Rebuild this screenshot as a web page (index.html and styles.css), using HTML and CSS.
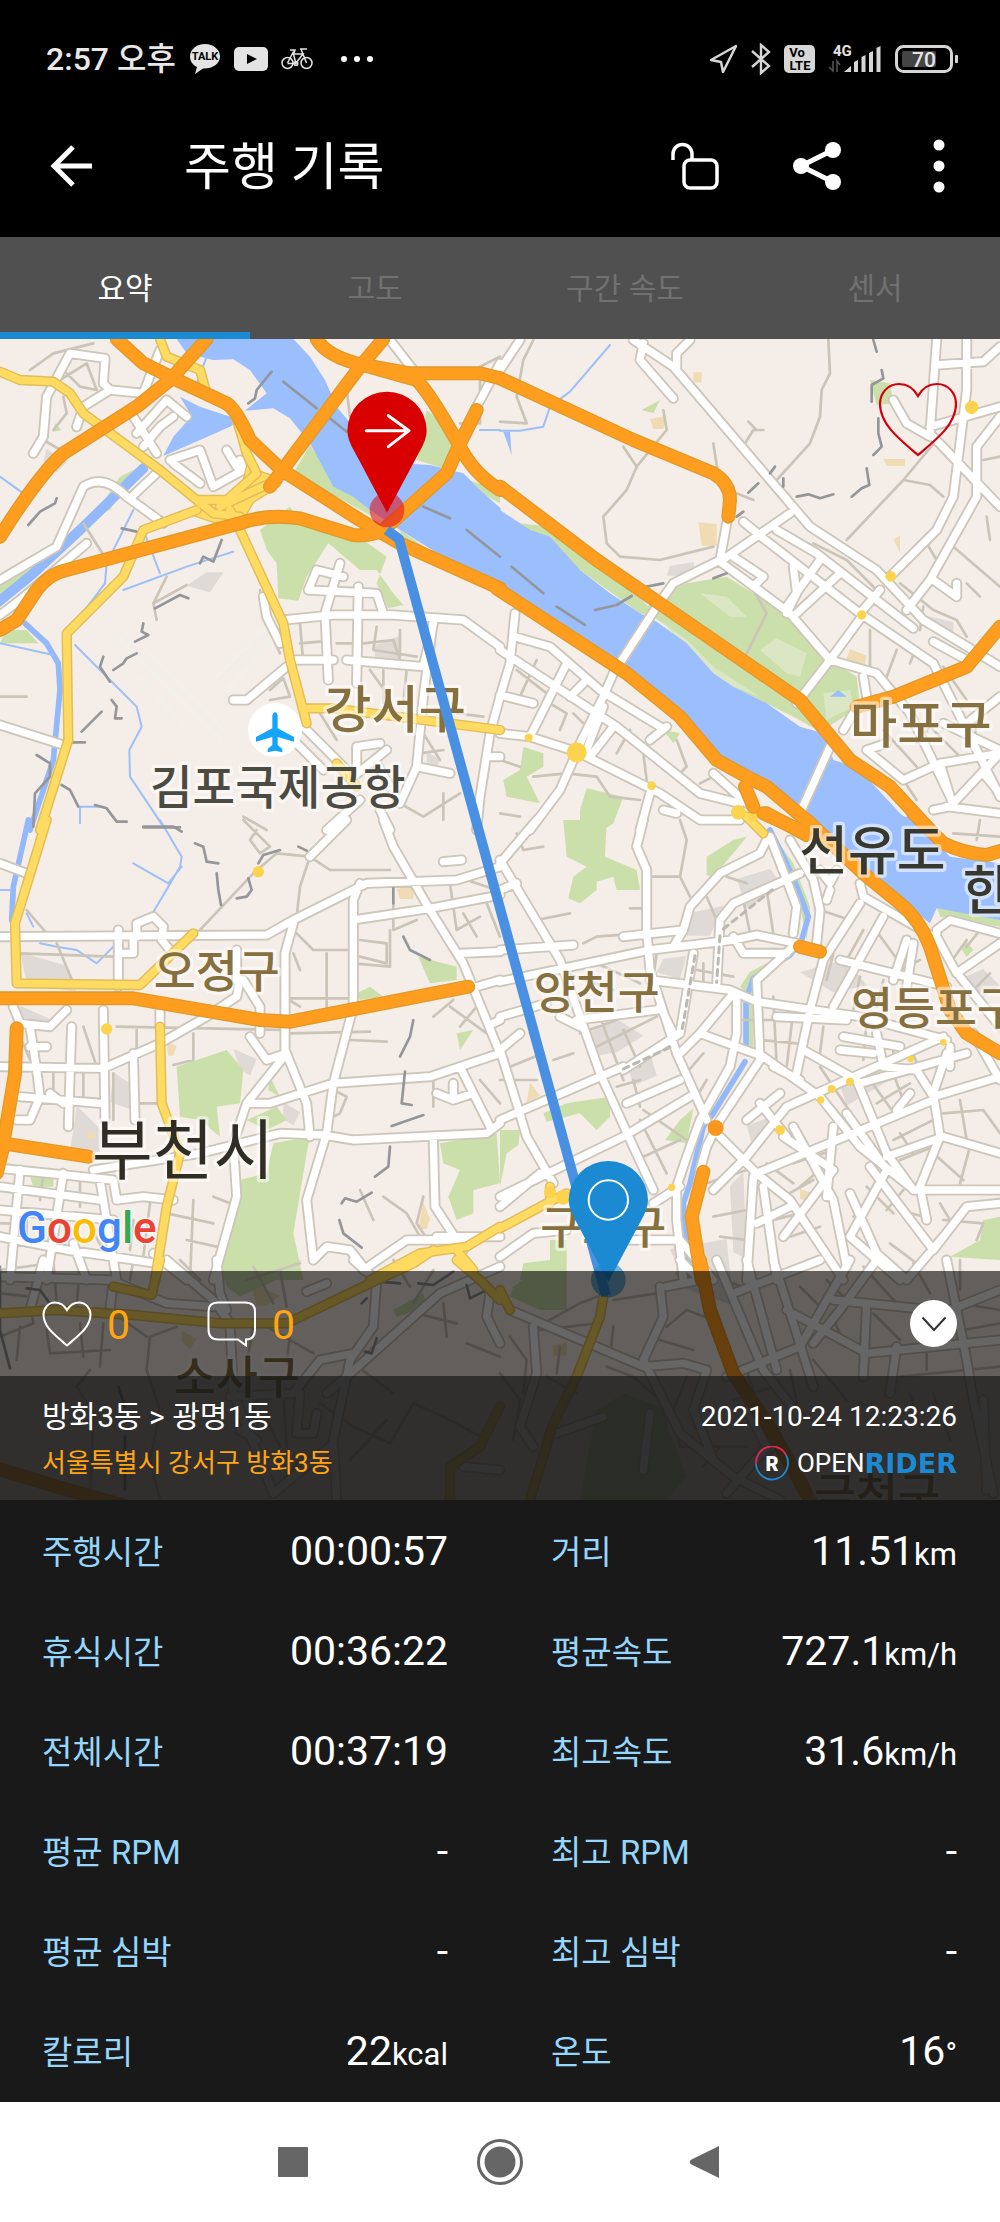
FILE: index.html
```html
<!DOCTYPE html>
<html lang="ko">
<head>
<meta charset="utf-8">
<meta name="viewport" content="width=device-width, initial-scale=1">
<title>주행 기록</title>
<link rel="stylesheet" href="styles.css">
</head>
<body>
<div class="status">
  <div class="status-left">
    <span class="clock">2:57 오후</span>
    <svg class="ic" width="32" height="32" viewBox="0 0 32 32"><path d="M16 1C7.500 1 1 6.500 1 13.500c0 5 3 8.500 7 10.500l-2 7 8-5.500c9 .5 17-4.500 17-12C31 6.500 24.500 1 16 1z" fill="#e4e4e4"/><text x="16" y="17" class="talk">TALK</text></svg>
    <svg class="ic" width="34" height="26" viewBox="0 0 34 26"><rect y="1" width="34" height="24" rx="5" fill="#e4e4e4"/><path d="M13 8l10 5-10 5z" fill="#000"/></svg>
    <svg class="ic" width="32" height="24" viewBox="0 0 32 24" fill="none" stroke="#e4e4e4" stroke-width="1.500"><circle cx="6.500" cy="16" r="5.500"/><circle cx="25.500" cy="16" r="5.500"/><circle cx="15" cy="16.500" r="1.800"/><path d="M6.500 16L12 5.500 15 16.500H6.500M12 7h10l-7 9M20 2l5.500 14M19 2h7M9 3h5l-1 3"/></svg>
    <svg class="ic more" width="34" height="8" viewBox="0 0 34 8" fill="#fff"><circle cx="4" cy="4" r="3"/><circle cx="17" cy="4" r="3"/><circle cx="30" cy="4" r="3"/></svg>
  </div>
  <div class="status-right">
    <svg class="ic" width="29" height="30" viewBox="0 0 29 30"><path d="M27 2L2 16l10 2 2 10z" fill="none" stroke="#d6d6d6" stroke-width="2.500" stroke-linejoin="round"/></svg>
    <svg class="ic" width="20" height="32" viewBox="0 0 20 32"><path d="M1 8l17 15-8 7V2l8 7L1 24" fill="none" stroke="#d6d6d6" stroke-width="2.400"/></svg>
    <svg class="ic" width="31" height="28" viewBox="0 0 31 28"><rect width="31" height="28" rx="5" fill="#d6d6d6"/><text x="13" y="12" class="lte">Vo</text><text x="16" y="25" class="lte">LTE</text></svg>
    <svg class="ic" width="54" height="30" viewBox="0 0 54 30"><text x="5" y="12" class="net">4G</text><path d="M5 17v10l-4-4M9 28V17l3 4" fill="none" stroke="#555" stroke-width="1.500"/><path d="M16 28l7-6v6zM26 28V18l4-2v12zM33.500 28V13l4-2v17zM41 28V9l4-2v21zM48.500 28V4l4-2v26z" fill="#d6d6d6"/></svg>
    <svg class="ic" width="64" height="28" viewBox="0 0 64 28"><rect x="1.500" y="1.500" width="55" height="25" rx="7" fill="none" stroke="#d6d6d6" stroke-width="3"/><rect x="7" y="6" width="34" height="16" rx="2" fill="#444"/><rect x="60" y="10" width="3" height="8" rx="1" fill="#d6d6d6"/><text x="29" y="22" class="batt">70</text></svg>
  </div>
</div>

<header class="appbar">
  <button class="icon-btn" aria-label="뒤로"><svg width="48" height="48" viewBox="0 0 48 48" fill="none" stroke="#fff" stroke-width="5"><path d="M44 24H7M25 5L6 24l19 19"/></svg></button>
  <h1>주행 기록</h1>
  <div class="actions">
    <button class="icon-btn" aria-label="잠금 해제"><svg width="48" height="48" viewBox="0 0 48 48" fill="none" stroke="#fff" stroke-width="3.500"><rect x="13" y="18" width="33" height="28" rx="6"/><path d="M2 18v-6a9.500 9.500 0 0 1 19 0v6"/></svg></button>
    <button class="icon-btn" aria-label="공유"><svg width="48" height="48" viewBox="0 0 48 48"><path d="M40 8L8 24l32 16" fill="none" stroke="#fff" stroke-width="5"/><g fill="#fff"><circle cx="40" cy="8" r="8"/><circle cx="8" cy="24" r="8"/><circle cx="40" cy="40" r="8"/></g></svg></button>
    <button class="icon-btn" aria-label="더 보기"><svg width="48" height="54" viewBox="0 0 48 54" fill="#fff"><circle cx="24" cy="6" r="5.500"/><circle cx="24" cy="27" r="5.500"/><circle cx="24" cy="48" r="5.500"/></svg></button>
  </div>
</header>

<nav class="tabs">
  <button class="tab active">요약</button>
  <button class="tab">고도</button>
  <button class="tab">구간 속도</button>
  <button class="tab">센서</button>
</nav>

<section class="map">
<svg class="map-art" viewBox="0 0 3000 3483">
<defs>
<g id="lanes">
  <g transform="translate(0 -27)"><path d="M90 120L160 70L280 40M180 150L260 100L290 180L240 170L200 130M130 330L200 370L250 330M160 300L200 250L190 200M500 740L460 820L470 870M460 820L560 765M250 580L320 690M780 780L790 860L840 970M900 880L910 1000M900 940L960 935M1010 940H1060M1090 940L1180 930L1200 990M1200 900V980M1130 890L1120 960L1250 980M810 1080L850 1045L870 1100L810 1110M960 1150L1010 1230M1110 1020L1160 1090M1150 1020V1120M1220 1020L1210 1120M1270 1210L1320 1290M1260 1270L1330 1260M1370 1150L1450 1160M1200 1420L1270 1460L1380 1390M1330 1390V1470M730 1460L800 1500M0 1100H80M1380 280H1440L1440 110L1500 80M1040 180L1050 260"/></g>
  <g transform="translate(1500 -27)"><path d="M100 30L70 90L50 200L80 280L0 275M985 30L990 130L965 180L960 260L930 340L830 450M735 340L760 300L790 300M745 275L770 300M640 340L660 470L760 510M370 350L410 410L500 300L490 240M410 410L380 480L310 560L320 640L360 680L480 690L640 650M1310 330L1210 450L1040 630M1210 450L1290 465L1330 500M1500 380L1450 390M1460 560L1470 630M1280 640L1310 690M1360 650L1500 770M1200 760L1300 840L1370 870L1400 920M1270 830L1260 900M1400 760L1440 800M1110 900V1030M1190 960L1160 1040M1250 950L1230 1000M1330 1010L1400 1110M760 780L800 850L740 970M940 640L1040 690L1130 780M50 1020L140 1090M110 990L60 1100M150 1120L200 1150L180 1200M220 1150L250 1180M350 1110L420 1150M390 1200L350 1270M0 1290L60 1310M100 1340L200 1330L290 1340L330 1400L420 1410M430 1270L440 1350M530 1230L560 1310L530 1340M640 1340L600 1360M0 1450L60 1460M1150 1200L1250 1310M1250 1240L1290 1190L1400 1300M1210 1350L1250 1410M1430 1170L1420 1260"/></g>
  <g transform="translate(0 1443)"><path d="M600 330L760 160L830 100L930 110L900 200L890 290M730 0L810 80L780 100L750 60L770 30M930 110L990 150L1170 150M890 340L940 390L1060 390M980 400V560M900 560L860 535H1050M880 400L900 450M1080 360L1160 370V430L1080 410M1060 430L1170 440V330M870 640L1110 635M1050 660L1160 665M1180 250V330L1250 300M1350 190L1370 330L1440 290M1390 280L1430 350M1460 250L1500 350M1400 180L1490 210M80 270L140 340M60 400L340 410M170 370L220 490M250 620L290 740M350 620L860 630M60 650L100 740M410 630V700M580 640V720L520 735M160 750V850M250 750V850M340 760V900M420 850H480M450 1150L430 1310M500 1180L640 1210M580 1140L570 1380M640 1130L690 1150M560 1260L650 1280M130 1060L120 1140M240 1060V1160M80 1200V1280M150 1180L170 1290M0 1210H60M260 1200L310 1290M0 1350L150 1330M400 1200L390 1290M1080 1110L1120 1200M1150 1130L1220 1180L1260 1250M1270 1130L1250 1210L1290 1270M1350 560L1460 640M1380 620L1430 560M1300 590L1360 540M1000 810L1040 830L1020 880L980 900M1300 770V860M1440 780L1500 850"/></g>
  <g transform="translate(1500 1443)"><path d="M50 40L70 90L130 80M140 370L110 300L210 280M390 265H430M440 170L540 170L560 60M540 0L560 60M540 170L570 230M620 230L650 300M730 240L750 340M800 210L820 340L780 350M680 170L740 190M250 370L290 350L420 340M470 400L460 470M290 430L420 490M200 460L340 510M240 640L350 600M270 690L470 590M300 590L370 780M370 630L420 740M90 640L130 700L30 740M160 720L220 700M0 780L110 780M350 800L420 780M400 780L420 860M430 870L560 960M430 1010L540 960M420 900L500 1060M590 450L700 470M610 430V500M610 700L550 770M620 780L590 830M730 600H840M820 530L830 740M880 570L860 740M780 660L890 670M970 620L960 700M1000 400L980 480M1050 300L960 270M1090 330L1040 420M1080 470L1060 570M1150 480L1130 560M1120 320L1200 430M1260 420L1200 450M1100 600L1090 720M1180 690V740M1230 680L1260 750M960 740L1020 830L1060 890M1110 780L1190 890M1180 760L1220 870M1130 850L1230 790M1000 990L880 1030M1050 950L930 1000M1200 940L1240 1000M1180 960L1320 890M1380 840L1400 960M1330 880L1450 870L1500 940M1200 1020L1300 980M1300 1000L1390 1080M1410 980L1380 1090M900 1100L970 1040M850 1130L940 1080M800 1030L880 1090M820 1200L900 1180M870 1250L960 1220M1100 1100L1180 1180M1060 1190L1120 1130M1160 1170L1210 1110M1200 1170L1270 1190M1170 1270L1250 1330M1330 1200L1450 1210L1430 1260M1320 1150L1350 1200M430 1100L390 1160M640 1190L740 1170M660 1250L740 1260M620 1090L740 1050M1400 360L1350 430M1440 330L1400 380M1470 460L1430 500M1360 40L1500 50M1440 0L1430 60"/></g>
  <g transform="translate(0 2763)"><path d="M0 100L90 110L100 190L0 230M160 0L170 130M240 0L230 140M60 200L50 300M140 210L150 280L330 270M240 190L250 290M310 190L300 320M370 180L440 230M530 200L450 230L440 330L480 450L450 600L480 720M270 330L230 380L280 460L270 720M400 0L390 60M540 0L600 60M760 20L820 130M740 60L900 10M840 30L860 140M760 200L740 310M800 200L940 280M870 220L860 310M770 410L750 520L800 600M850 410L860 560M960 430L1060 500L1170 550L1240 430L1330 470L1460 540M1160 480L1050 600M1130 180L1120 100M1180 0L1230 80M1300 30L1240 130M1330 130L1340 230M1250 160L1370 190M1060 310L1180 400M1400 250L1500 290M700 490L800 480L840 560M900 600L830 680"/></g>
  <g transform="translate(1500 2763)"><path d="M120 210L290 190M130 190L240 130L290 110M340 120L470 100M340 200L330 290M320 320L400 350L480 420L500 500M480 240L580 270M500 200L560 150L640 180M530 40L640 100M560 350L520 450L540 560L700 560M700 420L820 380M740 330L790 500M870 330L900 470L1000 500M940 300L1040 420M1000 180L1040 260M1120 160L1200 240M1280 150V330M1200 350L1500 320M1230 400L1260 500M1300 400L1350 540M1380 130L1500 150M1390 210L1500 190M1090 20L1190 130M1240 10L1290 100M1380 0V90M900 80L970 150M980 60L1040 120M700 70L770 100M30 230L80 300L70 400M0 340L60 420L40 540M140 350L230 400M180 260L170 340M610 620L660 560L740 560M760 620L840 560M1080 430L1190 470"/></g>
</g>
<g id="streets">
  <g transform="translate(0 -27)"><path d="M100 370L130 320L140 200L210 70L315 85L310 160L330 180L250 230L230 290M330 180L430 190L480 60M410 310L500 210L560 260M400 260L470 370M430 350L480 290L520 260M510 390L600 360L640 470L730 420L720 390M520 400L600 460M680 360L710 410M0 750L170 650L250 470Q310 430 380 500L490 580M390 505L480 420M0 855L60 810L260 640M850 870L1000 855L1180 855L1390 870L1500 950M985 1050L975 850L1020 700M1030 740L950 720L925 780L1130 790L1150 850M1075 770L1070 1060M880 990H1000M1040 990L1270 1010L1300 880M1300 870L1270 1100L1250 1310L1200 1420L1130 1300M790 800L800 860L840 940M700 1110H740L860 1010M910 1190L1050 1330M880 1230L970 1320M1070 1330V1250L1140 1240M1060 1340L1160 1260M1250 1310L1350 1330M1500 1100L1470 1210L1440 1400L1430 1500M1460 1280H1500M980 1500L1080 1410M1140 1440L1170 1500M0 1185L190 1245M1170 30L1240 120M1430 230L1500 100"/></g>
  <g transform="translate(1500 -27)"><path d="M400 30L520 110L930 590L1130 720L1270 870L1500 1010M60 30L0 120M430 40L420 90L520 205M530 110L530 70L570 30M680 580L660 690L520 760L470 830L340 1030L310 1100L230 1260M870 550L660 695L870 850L990 990L1130 1030L1230 1150L1360 1420M730 575L790 625L1080 850L1300 1000L1500 1400M830 600L950 670L1240 895M700 680L790 740L760 770M880 710L890 790L860 850M990 990L890 1120M1085 860L990 990M960 690L860 830M1020 730L890 850M1140 780L1080 850M1310 30L1290 310L1500 530M1400 30V180L1390 260L1360 500L1310 600L1170 740M1310 105L1450 95L1500 50M1290 290L1500 230M1500 260L1430 350V500L1290 750L1220 840M1180 210L1220 280L1290 320M1300 750L1370 800V760M1300 935L1400 990M0 960L350 1190L600 1390L720 1420M45 850L30 1000L0 1100M45 920L150 950L300 1080L480 1190M200 1000L90 1220M250 1060L210 1100M310 1130L260 1260M500 1190L450 1230M0 1095L100 1120M340 1190L270 1280M0 1210L90 1220L230 1265L480 1390L600 1470H720M220 1290L180 1380L90 1500M450 1390L420 1500M490 1440L530 1450M640 1330L740 1420M990 1250L900 1450M1100 1100L1090 1040M1030 1200L1060 1150M1100 1260L1210 1350L1320 1300L1500 1270M1160 1240L1100 1260M1300 1440L1350 1430L1500 1270M1340 1430L1500 1450M1450 1330L1500 1390M1330 1180L1500 1260M1320 1300L1360 1430M1400 1180L1500 1100"/></g>
  <g transform="translate(0 1443)"><path d="M0 130L80 160M0 350L800 345L880 300L1100 190L1370 180L1500 140M355 330V500M410 350V310L460 290L490 320L485 360L510 390M370 400H400V350M1150 0L1180 80L1290 270L1390 430L1500 700M930 110L1040 0M1080 190L1060 240V560L1000 790L980 940L920 1140L940 1320L980 1280L1050 1290L1090 1340M1060 300L1290 265L1500 225M1330 125L1385 120M1380 400L1500 395M1430 500L1500 480M1480 610L1500 600M880 310L855 400V690L920 850L930 950M40 560L60 610L150 620L200 570M90 620L110 750L120 830L90 900H50M0 740L310 745L480 670L620 590L710 530L720 480M710 390V480L730 480L780 560V640M310 570L315 900M215 620L205 920M60 830L300 850M90 680H140M150 820L190 850M400 700L405 900M480 570V620M750 650L800 720L860 700L740 850L700 970L710 1130L640 1380M750 850H810L1000 790L1290 770L1500 700M1380 740L1470 920M1310 820L1360 840L1420 820M1360 790V840M280 1050L600 1000L840 940L970 945L1060 960L1460 940L1500 910M1300 960L1305 1160L1390 1290M1310 1250H1500M1090 1350L1220 1260L1400 1260M0 1045L340 1080L350 1140M0 1100L300 1140M60 1050L30 1380M190 1060L140 1380M0 1170L340 1200M300 1080L350 1380M0 1250L200 1290L470 1330M220 1270L260 1380M460 1300L560 1380M350 1140L430 1130L520 1140"/></g>
  <g transform="translate(1500 1443)"><path d="M0 120L180 420L300 760L400 980L460 1110M0 130L110 0M430 0L410 80L440 150V330L450 450L530 700L620 900M0 210L50 190M0 485L450 390L700 360L770 345L890 370M0 390L220 375M370 350L550 330L570 260L660 160L780 100L800 60M550 330L520 380M900 160L700 250L660 300L650 500M700 350L730 400H860M810 50L860 180L890 260L880 340M870 60L940 180L960 270L950 370M450 480L690 510L770 545L1080 590L1340 660M0 590L140 550M230 600L470 570M480 560L520 640M580 400L540 640L370 750M700 520L600 640L540 700M0 690L60 640M0 690L50 850L80 950L160 1090M0 900L370 740M380 850L540 780M0 1130L370 950L570 830M180 590L240 620M600 640L790 710L960 830L1080 980L1230 1100M710 540V640L690 740L600 900L560 1010L530 1100V1200L550 1380M890 370L770 480L780 720L660 900L620 980L600 1050M660 950L770 1060L870 1140L950 1260L1030 1380M1350 740V680M1330 650L860 860L740 1010L640 1110M890 760L930 570L970 420L1080 250M1080 190L1090 230L1300 350M1150 290L1000 560M1020 420L1340 500M830 590L1040 600M910 690L1070 780L1160 1000L1240 1110L1500 1110M820 740L900 780M1080 790L1400 700M1340 700L1300 820L1320 950L1260 1100L1280 1200M1220 360L1180 480M1240 370L1220 500M1030 650L1200 680M1130 640L1150 740L1250 750L1300 830L1500 770M1020 690L1120 700M1310 360V330L1350 300L1500 340M1310 350L1370 460L1500 370M1380 470L1500 620M1420 640L1500 780M770 1060L1300 840M780 850L860 950M840 820L740 900M880 920L1000 1140L1040 1340M1000 920L980 1130M850 950L1000 1050L850 1250M1040 880L1160 1050L1050 1250L1200 1380M1160 1010L1330 950L1500 1000M1110 1040L1300 1290L1400 1160L1500 1150M760 1070L740 1380M790 1100L830 1380M770 1210L870 1160M1050 1120L1130 1300L1220 1380L1330 1250M0 1310L100 1240L200 1230M330 1260H540L640 1380M460 1150L540 1100M0 1160L120 1060M1230 820L1190 870M990 210L980 240M960 150L990 190L1010 150"/></g>
  <g transform="translate(0 2763)"><path d="M500 0L640 120L690 190L700 400L820 700M650 0L660 100L680 150M0 50L330 60L500 130L640 140M130 0L90 150M340 60L330 150M920 95L980 70M1060 0L1130 60L1120 200L1050 300L1000 540L1010 720M1500 20L1320 100L1040 350L980 400M690 410L880 400L960 300L1060 280M820 700L990 560M900 400L890 520H940L950 460M1470 100L1460 170L1500 250M1390 620L1500 630M720 510L770 540"/></g>
  <g transform="translate(1500 2763)"><path d="M30 150L430 320L550 310L620 330M480 80L490 170L430 300L540 520L700 650L840 720M500 80L600 60L540 0M650 0L790 330L900 470M740 0L830 330M820 0L940 380M700 100L960 0M860 150L1100 280L1500 240M1050 0L900 260L680 350M1130 0L1020 150L940 250M1340 0L1400 300L1420 420L1480 700M1100 130L1090 350M1190 260L1170 400M1350 150L1500 90M1000 120L1300 150M100 200L110 340L60 500L100 560M170 520L310 470M620 330L580 450L640 600M450 460L430 630M740 450L800 560L680 700M1450 420L1460 690"/></g>
</g>
<g id="avenues">
  <g transform="translate(0 -27)"><path d="M0 125L60 150L160 155L210 190L250 250L480 420L590 510L680 510L770 430L740 370L720 300L700 240M480 27L500 80L600 120L620 190L700 240M690 540L720 600L850 880L870 990L920 1180M590 540L430 600L370 740L200 910L205 1230L120 1500M660 530L830 450M590 510L640 550L720 560M910 1135L1000 1135L1500 1200M1010 1300L1070 1370"/></g>
  <g transform="translate(0 1443)"><path d="M140 0L45 310L50 490L420 495L580 340M480 620L485 850L540 1000L500 1160L465 1380M1110 1380L1260 1300L1400 1280L1500 1220M1370 1290L1420 1350"/></g>
  <g transform="translate(1500 1443)"><path d="M0 1225L140 1150L200 1120M150 1100V1150M740 -10L790 40"/></g>
  <g transform="translate(0 2763)"><path d="M480 0L455 105L340 80M0 160L170 150L400 165L660 190H860L1100 75L1240 10L1300 -30M1370 0L1440 60L1500 120M1500 440L1440 560L1350 620V720"/></g>
  <g transform="translate(1500 2763)"><path d="M0 90L30 150M310 110L300 170L230 350L160 490L120 620L90 720"/></g>
</g>
<g id="highways">
  <g transform="translate(0 -27)"><path d="M350 27L430 100L520 145L680 220Q710 240 750 330L845 420L1080 570L1200 640L1500 775M620 27L510 150L410 230L190 370Q120 430 0 620M0 900L50 870L110 780Q150 730 200 720L720 580Q800 550 900 565L1060 615Q1110 620 1150 600L1340 430L1380 340L1430 240M810 470L1080 110L1150 27M950 27Q980 80 1090 105L1250 150Q1290 190 1380 350Q1420 430 1500 480M1090 105L1230 130H1440L1500 145"/></g>
  <g transform="translate(1500 -27)"><path d="M0 145L400 330L640 430Q690 460 690 510L685 560M0 470L290 690L900 1110L1050 1290L1170 1370L1290 1500M-10 775L380 1030L540 1160L650 1290L740 1340L800 1370L930 1480M1500 890L1400 1010L1180 1100L1070 1130M735 1370L760 1430M790 1450L900 1500"/></g>
  <g transform="translate(0 1443)"><path d="M0 535H400L780 600L870 605L1405 500M50 625L45 760L10 970L265 1010M10 980L-10 1060"/></g>
  <g transform="translate(1500 1443)"><path d="M800 -20L920 45M920 0L1090 160L1200 250Q1260 300 1290 380L1350 570L1400 640L1500 700M1240 -20L1330 70Q1390 100 1460 105L1510 90M900 380L960 395M610 1055L575 1190L605 1380"/></g>
  <g transform="translate(0 2763)"><path d="M-10 625L170 680L400 745"/></g>
  <g transform="translate(1500 2763)"><path d="M600 0L630 150L700 340L820 520L930 720"/></g>
</g>
</defs>

<rect width="3000" height="3483" fill="#f5ede7"/>
<g class="blocks">
  <path d="M140 330L200 370L170 400L130 370zM560 740L620 700L670 700L630 760zM1120 920L1200 890V980H1130zM1280 1240L1320 1260L1310 1290L1280 1280zM2400 1900L2500 1960L2600 1940L2540 1860zM2240 830L2270 870L2250 940L2230 910zM2780 830L2860 850L2860 890L2790 870zM60 1840L200 1880L230 1960L80 1930zM60 2000L150 2040L140 2060L70 2060zM230 2300L310 2380L300 2440H210zM340 2200L400 2240L390 2310L330 2290zM700 2130L770 2160L750 2210L720 2190zM850 2290L900 2320L880 2360L850 2340zM1990 1860L2060 1850L2040 1920L1970 1900zM1770 2080L1850 2040L1930 2090L1850 2140L1790 2150zM1880 2170L1950 2140L1970 2210L1900 2240zM2210 1620L2310 1590L2350 1640L2240 1710zM2080 1720L2170 1700L2130 1790L2060 1790zM2240 2360L2350 2320L2260 2430zM2190 2540L2230 2500L2240 2760L2200 2740zM2520 2240L2620 2180L2690 2210L2540 2300zM2010 2730L2180 2700L2200 2900L2060 2850zM2880 1920L2950 1890L3000 1940L2930 1990zM2010 680L2080 670L2090 710L2000 710z"/>
</g>
<g class="sand">
  <path d="M2095 550L2150 555V620H2105zM2650 360H2715V380H2660zM2080 100H2105V130H2080zM1950 240L2000 230L1990 270H1960zM1190 1650L1240 1640V1680L1200 1680zM260 2380H285V2400H260zM1270 2590L1290 2640L1280 2670H1255zM750 2830L840 2870L800 2900H770zM545 2975L590 3000L570 3030L545 3010zM1590 2230L1620 2270L1580 2290zM2400 2550L2430 2560L2440 2590L2400 2580zM2550 930L2600 950L2590 1000L2540 960zM2680 600L2700 590V640zM500 2110L530 2120L520 2150H505zM1660 3020L1700 3010V3050H1660z"/>
</g>
<g class="green">
  <g transform="translate(0 -27)"><path d="M870 530L780 600L800 660L830 700L835 805L895 812L920 740L985 640L1080 720L1130 720L1180 790L1210 825L1165 835L1130 760L1160 680L1090 630L900 580zM930 345L1010 470L1090 500L1120 560L880 430zM1280 240L1330 280L1370 370L1330 415L1250 390zM1200 600L1280 655L1210 650zM0 760L120 700L60 760L0 800zM20 900L80 900L115 940L0 940zM1375 440L1500 480V520L1390 460zM360 440L420 410L330 540L280 560zM165 280L185 300L160 305z"/></g>
  <g transform="translate(1500 -27)"><path d="M0 510L60 580L150 590L300 700L400 780L480 870L420 850L240 720L150 650L70 590zM490 790L560 760L680 740L760 790L870 850L990 990L1070 1040L1080 1130L1000 1180L960 1205L880 1160L700 1070L640 1010L560 930L430 840zM70 1250L130 1270V1310L80 1340L120 1420L20 1400L10 1350L60 1320zM260 1375L370 1400L340 1480L310 1500H240V1440zM1110 150L1170 160L1180 220L1130 225zM425 240L480 210L460 250zM490 1200L540 1210L520 1240z"/></g>
  <g transform="translate(0 1443)"><path d="M530 740L680 690L730 750L720 850L650 860L660 950L600 900L540 890zM820 970L930 950L920 1000L880 1240L910 1380H660L700 1200L720 1080L800 1060zM1320 970L1490 940L1500 1090L1420 1110V1180L1370 1200L1345 1130L1380 1050L1330 1030zM1255 410L1370 440V480L1290 490zM1070 520L1110 500L1150 530L1080 540zM740 900L830 860L860 900L800 930zM810 770L840 830L805 810zM90 1070H160V1100H100zM1370 640L1420 630L1380 690z"/></g>
  <g transform="translate(1500 1443)"><path d="M190 0H320L315 110L410 150L420 210H350L340 170L290 185V210L240 250L205 235L220 170L260 140L200 110zM620 110L700 60L740 50L700 100L640 170L620 165zM130 880L200 850L330 830V890L290 930L240 880L140 905zM0 930L60 930L55 975L20 1000L0 1100zM580 865L560 970L495 960L540 900zM1500 1190L1450 1200L1440 1260L1350 1310L1500 1320zM150 1260H200V1380H60L70 1330L150 1320zM1310 260L1500 300V320L1320 290zM1380 380L1400 365L1420 390L1400 410zM720 500L750 455L860 400L740 520zM1290 730L1320 720L1310 750zM800 20L880 130L930 260L920 360L890 200zM740 550H760V680L740 690z"/></g>
  <g transform="translate(0 2763)"><path d="M660 0H905L850 50L720 110L680 80zM1180 150L1270 100L1280 140L1190 170z"/></g>
  <g transform="translate(1500 2763)"><path d="M40 80L150 0L200 60V150L120 150L30 110zM290 450L370 400L480 440L560 650L500 720H240L270 550z"/></g>
</g>
<g class="lawn" transform="translate(1500 -27)"><path d="M780 960L830 925L920 970L900 1040L860 1030zM480 870L560 930L640 1010L780 1100L700 1070L620 1020zM600 790L680 800L740 860L690 860zM970 1090L1050 1080L1060 1130L980 1170z"/></g>

<g class="water">
  <g transform="translate(0 -27)"><path d="M530 27L560 70L640 90L700 88L750 120L800 190L735 242L820 235L870 265L930 340L1000 470L1060 500L1110 540L1200 600L1330 680L1502 760V535L1440 480L1390 430L1290 405L1200 400L1060 290L1010 230L975 150L930 80L880 27zM540 200L600 230L720 270L690 290L600 330L490 378L520 320L575 258z"/></g>
  <g transform="translate(1500 -27)"><path d="M0 540L90 600L150 620L240 720L330 790L420 850L470 875L560 940L640 1030L700 1070L800 1120L900 1190L970 1210L1000 1290L1070 1310L1200 1450L1260 1500H940L820 1360L650 1290L540 1160L380 1030L0 780zM990 1100L1015 1080L1040 1100zM10 305H30L35 375z"/></g>
  <g transform="translate(1500 1443)"><path d="M930 -10H1240L1350 110L1500 130V300L1310 265L1290 310L1200 240L1090 150L950 60z"/></g>
</g>
<g class="stream">
  <g transform="translate(0 -27)"><path class="wide" d="M-10 820L100 730L240 600L430 415"/><path d="M75 880L140 940L175 1000L180 1080L160 1290L90 1500"/></g>
  <g transform="translate(0 1443)"><path d="M85 0L40 200L35 300"/></g>
  <g transform="translate(1500 1443)"><path d="M810 30L860 130L890 200L925 290L905 360L870 405L760 475L738 540V690M735 725L640 880L610 920L570 1090L550 1150L570 1380"/></g>
</g>
<g class="brook">
  <g transform="translate(0 -27)"><path d="M0 440L70 490M225 945L410 1130L425 1190L388 1260L390 1340L490 1490M400 540L320 700L315 760L240 860M370 780L560 710L700 665M0 940L160 975M620 80L580 190M1440 300H1500M430 600L480 730M240 1430H310M240 1430V1480"/></g>
  <g transform="translate(1500 -27)"><path d="M330 45L210 185L150 230L130 290L60 302H0"/></g>
  <g transform="translate(0 1443)"><path d="M480 0L545 110L540 140L455 285M400 130L505 190L545 140M0 210H35M80 280L100 320M120 370L170 380L230 390L290 430L340 380"/></g>
</g>
<use href="#lanes" class="lane"/>
<g class="runway" transform="translate(0 -27)"><path d="M350 920L660 1230M440 960L720 1250M640 1050L790 900M680 1080L820 930M340 960L380 900M420 1040L560 1200"/></g>
<use href="#streets" class="street-case"/>
<use href="#streets" class="street"/>
<g class="rail"><path d="M2170 1770L2320 1650M2160 1790L2150 1930M2085 1850L2045 2080M1870 2190L2020 2120"/></g>
<g class="border">
  <g transform="translate(0 -27)"><path d="M85 585L120 545L165 520L170 505M815 125L770 180L765 205L745 220M365 595L410 605M600 700L610 680L640 695L665 630M465 835L540 795L565 805M430 880L425 905L445 915L405 935M410 970L380 985L370 1000L340 1020M310 980L300 1010L330 1055M335 1110L350 1130L345 1165L365 1165M305 1145L245 1205M110 1275L150 1300L150 1340L105 1390L100 1490M185 1365L210 1380L235 1430M285 1425L320 1435L350 1475L380 1475M430 1492H540M215 1237H255M1500 680L1400 600M850 155L950 235M990 265L1040 305M1270 530L1350 565"/></g>
  <g transform="translate(1500 -27)"><path d="M1120 30L1130 65M1145 120L1150 145L1115 165V215M1135 265V310L1145 350L1120 375M1100 415L1108 465L1085 475L1055 500M890 500L925 493L960 505L1000 493M825 410L810 430M850 445V470M775 460L745 488M730 545L710 560M440 770L490 760M680 730L640 745M35 710L130 790M170 830L255 885M285 840L350 825L395 798"/></g>
  <g transform="translate(0 1443)"><path d="M430 20L480 20L520 20L545 35M585 70L610 80L620 125L655 130M650 160L655 210L663 255M710 235L740 230L755 210L745 175M775 130L790 105L840 90M895 80L920 92M1180 205V250M1210 350L1230 390L1290 420M1240 600L1230 650L1200 710M1215 755L1205 850L1235 855M1175 918L1270 885M1170 980L1165 1040L1125 1070M1025 1150L1035 1135L1070 1145L1115 1118M1018 1200L1030 1240L1085 1283"/></g>
  <g transform="translate(0 2763)"><path d="M0 20L0 210L30 325M80 85L120 90L160 145M1130 235L1115 280L1095 275M1140 65L1200 70M1255 70L1300 75L1360 35M1400 75L1410 115L1450 95L1490 90M1085 130L1100 115M355 380L375 440M375 530V690"/></g>
</g>
<path class="junction" d="M590 490L680 490L720 460L740 380L790 400L850 420L840 440L760 490L720 560L640 550L580 530z"/>
<use href="#avenues" class="avenue-case"/>
<use href="#avenues" class="avenue"/>
<g class="spots">
  <circle cx="775" cy="1598" r="17"/><circle cx="320" cy="2070" r="17"/><circle cx="1730" cy="1240" r="30"/><circle cx="2585" cy="828" r="14"/><circle cx="2672" cy="712" r="16"/><circle cx="1586" cy="1196" r="12"/><circle cx="1955" cy="1340" r="13"/><circle cx="2915" cy="205" r="20"/><circle cx="2215" cy="1420" r="22"/><circle cx="2260" cy="1430" r="16"/><circle cx="2550" cy="2228" r="12"/><circle cx="2495" cy="2250" r="12"/><circle cx="2462" cy="2283" r="11"/><circle cx="2340" cy="2373" r="15"/><circle cx="2732" cy="2160" r="10"/><circle cx="2830" cy="2110" r="10"/><circle cx="2015" cy="2545" r="11"/><circle cx="1650" cy="2560" r="18"/><circle cx="1690" cy="2575" r="22"/>
</g>
<use href="#highways" class="highway-case"/>
<use href="#highways" class="highway"/>
<circle cx="2147" cy="2367" r="24" fill="#f9961b"/>

<g class="district">
  <text x="973" y="1166">강서구</text><text x="2550" y="1211">마포구</text>
</g>
<g class="district small">
  <text x="461" y="1946">오정구</text><text x="1601" y="2009">양천구</text><text x="2553" y="2059">영등포구</text><text x="1621" y="2716">구로구</text><text x="521" y="3164">소사구</text><text x="2442" y="3516">금천구</text>
</g>
<g class="place"><text x="2398" y="1593">선유도</text><text x="2888" y="1714">한</text></g>
<text class="city" x="276" y="2506">부천시</text>
<circle cx="825" cy="1173" r="81" fill="#fff"/>
<path d="M825 1120q8 0 8 14v34l49 26v14l-49-14v24l14 12v10l-22-5-22 5v-10l14-12v-24l-49 14v-14l49-26v-34q0-14 8-14z" fill="#14a5fb"/>
<text class="airport" x="450" y="1395">김포국제공항</text>

<path class="route" d="M1160 573L1197 600L1818 2870"/>
<circle cx="1161" cy="513" r="52" fill="#dc1420" opacity=".6"/>
<g transform="translate(1161 275)"><path d="M0 246L-98 62Q-119 26 -119 0A119 117 0 0 1 119 0Q119 26 98 62z" fill="#d80000"/><path d="M-62 0H64M4-45L66 0L4 48" fill="none" stroke="#fff" stroke-width="9" stroke-linecap="round"/></g>
<circle cx="1825" cy="2823" r="52" fill="#1b8ad2" opacity=".6"/>
<g transform="translate(1825 2583)"><path d="M0 246L-98 62Q-119 26 -119 0A119 117 0 0 1 119 0Q119 26 98 62z" fill="#1b8ad2"/><circle r="59" fill="none" stroke="#fff" stroke-width="6"/></g>
</svg>

<div class="map-overlay">
  <button class="icon-btn favorite" aria-label="좋아요"><svg width="78" height="76" viewBox="0 0 78 76"><path d="M39 14C34 5 27 2 20 2 9 2 1 11 1 22c0 20 19 35 38 51C58 57 77 42 77 22 77 11 69 2 58 2c-7 0-14 3-19 12z" fill="none" stroke="#d0000c" stroke-width="2.200"/></svg></button>
  <div class="google" aria-label="Google"><span class="g-blue">G</span><span class="g-red">o</span><span class="g-yellow">o</span><span class="g-blue">g</span><span class="g-green">l</span><span class="g-red">e</span></div>
  <div class="social">
    <button class="count"><svg width="50" height="46" viewBox="0 0 50 46"><path d="M25 9C22 4 18 1.500 13 1.500 6.500 1.500 1.500 7 1.500 13.500 1.500 26 13 34 25 44.500 37 34 48.500 26 48.500 13.500 48.500 7 43.500 1.500 37 1.500c-5 0-9 2.500-12 7.500z" fill="none" stroke="#fff" stroke-width="2"/></svg><span>0</span></button>
    <button class="count"><svg width="50" height="46" viewBox="0 0 50 46"><path d="M11 1.500h27c7 0 10 3 10 9v18c0 7-3 10-9 10v6l-8-6H11c-7 0-9.500-4-9.500-10v-18c0-6 3.500-9 9.500-9z" fill="none" stroke="#fff" stroke-width="2"/></svg><span>0</span></button>
    <button class="collapse" aria-label="접기"><svg width="26" height="16" viewBox="0 0 26 16"><path d="M1.500 1.500L13 14 24.500 1.500" fill="none" stroke="#333" stroke-width="2"/></svg></button>
  </div>
  <div class="info">
    <div class="line"><span class="ride">방화3동 &gt; 광명1동</span><time>2021-10-24 12:23:26</time></div>
    <div class="line"><span class="address">서울특별시 강서구 방화3동</span>
      <span class="brand"><svg width="34" height="36" viewBox="0 0 34 36" fill="none" stroke-width="1.800"><path d="M1 18A16 16.500 0 0 1 31 9" stroke="#e0284f"/><path d="M31 9A16 16.500 0 1 1 1 18" stroke="#1b8ad2"/><text x="17" y="25" class="brand-r">R</text></svg><span class="open">OPEN</span><span class="rider">RIDER</span></span></div>
  </div>
</div>
</section>

<dl class="stats">
  <div class="stat"><dt>주행시간</dt><dd>00:00:57</dd></div>
  <div class="stat"><dt>거리</dt><dd>11.51<small>km</small></dd></div>
  <div class="stat"><dt>휴식시간</dt><dd>00:36:22</dd></div>
  <div class="stat"><dt>평균속도</dt><dd>727.1<small>km/h</small></dd></div>
  <div class="stat"><dt>전체시간</dt><dd>00:37:19</dd></div>
  <div class="stat"><dt>최고속도</dt><dd>31.6<small>km/h</small></dd></div>
  <div class="stat"><dt>평균 RPM</dt><dd>-</dd></div>
  <div class="stat"><dt>최고 RPM</dt><dd>-</dd></div>
  <div class="stat"><dt>평균 심박</dt><dd>-</dd></div>
  <div class="stat"><dt>최고 심박</dt><dd>-</dd></div>
  <div class="stat"><dt>칼로리</dt><dd>22<small>kcal</small></dd></div>
  <div class="stat"><dt>온도</dt><dd>16<small>°</small></dd></div>
</dl>

<nav class="sysnav">
  <button class="icon-btn" aria-label="최근 앱"><svg width="48" height="48" viewBox="0 0 48 48"><rect x="8" y="9" width="30" height="30" rx="1" fill="#666"/></svg></button>
  <button class="icon-btn" aria-label="홈"><svg width="48" height="48" viewBox="0 0 48 48"><circle cx="24" cy="24" r="21.500" fill="none" stroke="#666" stroke-width="3"/><circle cx="24" cy="24" r="15.500" fill="#666"/></svg></button>
  <button class="icon-btn" aria-label="뒤로 가기"><svg width="48" height="48" viewBox="0 0 48 48"><path d="M37 8v32L8.500 26Q7 24 8.500 22z" fill="#666"/></svg></button>
</nav>
</body>
</html>
```
FILE: styles.css
```css
* { box-sizing: border-box; }

body {
  margin: 0;
  background: #000;
  color: #fff;
  font-family: Roboto, "Noto Sans CJK KR", sans-serif;
}

button {
  padding: 0;
  border: 0;
  background: none;
  color: inherit;
  font: inherit;
  cursor: pointer;
}

svg { display: block; }

.icon-btn {
  display: flex;
  align-items: center;
  justify-content: center;
}

/* status bar */
.status {
  display: flex;
  align-items: center;
  justify-content: space-between;
  padding: 36px 41px 12px 46px;
}

.status-left,
.status-right {
  display: flex;
  align-items: center;
  gap: 13px;
}

.clock {
  color: #e8e8e8;
  font-size: 32px;
  font-weight: 500;
  line-height: 46px;
}

.more { margin-left: 14px; }

.talk,
.lte,
.net,
.batt,
.brand-r {
  font-family: Roboto, sans-serif;
  font-weight: 700;
}

.talk { font-size: 11px; text-anchor: middle; }
.lte { font-size: 13px; text-anchor: middle; }
.net { font-size: 15px; fill: #e4e4e4; }
.batt { font-size: 21px; font-weight: 500; fill: #e4e4e4; text-anchor: middle; }

/* app bar */
.appbar {
  display: flex;
  align-items: center;
  min-height: 143px;
  padding: 0 37px 0 48px;
}

.appbar h1 {
  flex: 1;
  margin: 0 0 0 88px;
  padding-top: 5px;
  font-size: 51px;
  font-weight: 400;
  line-height: 60px;
}

.actions {
  display: flex;
  align-items: center;
  gap: 74px;
}

.tabs {
  display: grid;
  grid-template-columns: repeat(4, 1fr);
  background: #505050;
}

.tab {
  padding: 9px 0 0;
  border-bottom: 7px solid transparent;
  color: #717171;
  font-size: 30px;
  line-height: 86px;
}

.tab.active {
  border-bottom-color: #1b8ad2;
  color: #fff;
}

/* map */
.map { display: grid; }

.map-art,
.map-overlay { grid-area: 1 / 1; }

.map-art {
  width: 100%;
  height: auto;
  overflow: hidden;
}

.map-overlay {
  display: flex;
  flex-direction: column;
}

.map-art path {
  stroke-linejoin: round;
  stroke-linecap: round;
}

.blocks { fill: #dfdad6; }
.sand { fill: #f0dcb2; }
.green { fill: #cbdfaa; }
.lawn { fill: #dbe7c4; }
.water { fill: #9bbefd; }

.stream,
.brook,
.lane,
.runway,
.rail,
.border,
.street-case,
.street,
.avenue-case,
.avenue,
.highway-case,
.highway,
.route { fill: none; }

.stream { stroke: #93b9fb; stroke-width: 17; }
.wide { stroke-width: 30; }
.brook { stroke: #9dc0f8; stroke-width: 6; }
.lane { stroke: #cbc4b8; stroke-width: 8; }
.runway { stroke: #f2f0e8; stroke-width: 14; }
.street-case { stroke: #cdc6ba; stroke-width: 33; }
.street { stroke: #fff; stroke-width: 22; }
.rail { stroke: #bdb8b0; stroke-width: 9; stroke-dasharray: 18 16; }
.border { stroke: #94969a; stroke-width: 8; }
.avenue-case { stroke: #e2bd5c; stroke-width: 31; }
.avenue { stroke: #ffdc61; stroke-width: 22; }
.junction { fill: #ffdc61; stroke: #e2bd5c; stroke-width: 4; }
.spots { fill: #fcd34c; }
.highway-case { stroke: #e09a2a; stroke-width: 42; }
.highway { stroke: #ff9d1f; stroke-width: 34; }
.route { stroke: #4a90e2; stroke-width: 30; }
.map-art .route { stroke-linecap: butt; }

.district,
.place,
.city,
.airport {
  font-family: "Noto Sans CJK KR", sans-serif;
  font-weight: 500;
  paint-order: stroke;
  stroke: rgba(255, 255, 255, .55);
  stroke-width: 20px;
  stroke-linejoin: round;
}

.district { fill: #86703f; font-size: 154px; }
.district.small { font-size: 137px; }
.place { fill: #38382f; font-size: 159px; }
.city { fill: #302d24; font-size: 198px; font-weight: 400; }
.airport { fill: #4c4b42; font-size: 139px; }

.favorite {
  align-self: flex-end;
  margin: 43px 43px auto 0;
}

.google {
  padding: 0 17px 10px;
  font-size: 44px;
  font-weight: 500;
  line-height: 66px;
  text-shadow: 0 0 3px #fff, 0 0 3px #fff, 0 0 3px #fff;
}

.g-blue { color: #4285f4; }
.g-red { color: #ea4335; }
.g-yellow { color: #fbbc05; }
.g-green { color: #34a853; }

.social {
  display: flex;
  align-items: center;
  gap: 77px;
  padding: 29px 43px 29px 42px;
  background: rgba(0, 0, 0, .6);
}

.count {
  display: flex;
  align-items: center;
  gap: 15px;
  color: #ffa514;
  font-size: 41px;
  line-height: 43px;
}

.count span { padding-top: 4px; }

.collapse {
  display: flex;
  align-items: center;
  justify-content: center;
  width: 47px;
  height: 47px;
  margin-left: auto;
  border-radius: 50%;
  background: #fff;
}

.info {
  padding: 17px 43px 13px 42px;
  background: rgba(20, 20, 20, .88);
}

.line {
  display: flex;
  align-items: center;
  justify-content: space-between;
  line-height: 47px;
}

.ride { font-size: 30px; }
.line time { font-size: 28px; }
.address { color: #ffa514; font-size: 26px; }

.brand {
  display: flex;
  align-items: center;
  font-size: 26px;
}

.brand-r { fill: #fff; font-size: 20px; font-weight: 900; text-anchor: middle; }
.open { margin-left: 8px; }

.rider {
  color: #1b8ad2;
  font-family: "DejaVu Sans", sans-serif;
  font-size: 27px;
  font-weight: 700;
}

/* figures */
.stats {
  display: grid;
  grid-template-columns: 1fr 1fr;
  column-gap: 103px;
  margin: 0;
  padding: 1px 43px 1px 42px;
  background: #191919;
}

.stat {
  display: flex;
  align-items: center;
  justify-content: space-between;
  min-height: 100px;
}

.stat dt { padding-bottom: 3px; color: #96d6fb; font-size: 33px; }
.stat dd { margin: 0; font-size: 41px; }
.stat small { font-size: 31px; }

.sysnav {
  display: flex;
  align-items: center;
  justify-content: center;
  gap: 158px;
  min-height: 120px;
  background: #fff;
}
```
